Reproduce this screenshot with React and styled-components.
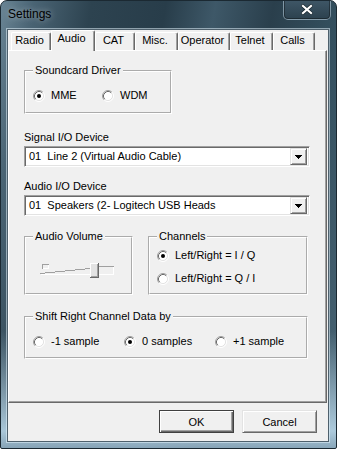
import React from "react";
import styled, { createGlobalStyle } from "styled-components";

const Global = createGlobalStyle`
  html, body {
    margin: 0;
    padding: 0;
    background: #fff;
  }
  body {
    width: 337px;
    height: 449px;
    overflow: hidden;
    font-family: "Liberation Sans", Arial, sans-serif;
    font-size: 11px;
    color: #000;
  }
`;

const Window = styled.div`
  box-sizing: border-box;
  width: 337px;
  height: 449px;
  display: flex;
  flex-direction: column;
  border: 1px solid #1b2932;
  border-radius: 7px 7px 2px 2px;
  overflow: hidden;
  background:
    linear-gradient(to bottom, rgba(255,255,255,0) 0, rgba(255,255,255,0) 330px, rgba(190,220,238,0.85) 430px, rgba(140,170,190,0.9) 449px),
    linear-gradient(100deg, #6a8595 0%, #4a6474 8%, #2d4350 22%, #283d4a 40%, #3e5868 52%, #2a3f4c 66%, #34505f 82%, #4a6575 100%);
`;

const TitleBar = styled.div`
  height: 28px;
  display: flex;
  align-items: flex-start;
  flex-shrink: 0;
`;

const Title = styled.div`
  padding: 6px 0 0 7px;
  font-size: 12px;
  line-height: 14px;
  color: #000;
  text-shadow: 0 0 6px rgba(255, 255, 255, 0.55);
`;

const CloseButton = styled.div`
  box-sizing: border-box;
  margin: -1px 5px 0 auto;
  width: 48px;
  height: 20px;
  display: flex;
  align-items: center;
  justify-content: center;
  border: 1px solid rgba(200, 222, 236, 0.5);
  border-top: none;
  border-radius: 0 0 5px 5px;
  box-shadow: inset 0 0 0 1px rgba(0, 0, 0, 0.35);
  background: linear-gradient(#3f5767, #2c414e);
`;

const Client = styled.div`
  box-sizing: border-box;
  flex: 1;
  margin: 0 7px 6px 6px;
  display: flex;
  flex-direction: column;
  background: #f0f0f0;
  border: 1px solid #4e606c;
  box-shadow: 0 0 0 1px rgba(225, 242, 252, 0.55);
`;

const TabStrip = styled.div`
  height: 20px;
  display: flex;
  align-items: flex-end;
  padding-left: 3px;
  position: relative;
  z-index: 1;
`;

const Tab = styled.div`
  box-sizing: border-box;
  width: ${(p) => p.$w}px;
  height: ${(p) => (p.$active ? 21 : 18)}px;
  margin-bottom: ${(p) => (p.$active ? -1 : 0)}px;
  padding: 1px 3px 0 0;
  text-align: center;
  line-height: 13px;
  background: #f0f0f0;
  border: 1px solid #fff;
  border-right-color: #696969;
  border-bottom: none;
  border-radius: 2px 2px 0 0;
  box-shadow: inset -1px 0 0 #a0a0a0;
`;

const Panel = styled.div`
  box-sizing: border-box;
  height: 353px;
  margin-right: 1px;
  padding-left: 15px;
  display: flex;
  flex-direction: column;
  align-items: flex-start;
  border: 1px solid;
  border-color: #fff #696969 #696969 #fff;
  box-shadow: inset -1px -1px 0 #a0a0a0;
`;

const Group = styled.fieldset`
  box-sizing: border-box;
  min-width: 0;
  margin: ${(p) => p.$mt || 0}px 0 0;
  width: ${(p) => p.$w}px;
  height: ${(p) => p.$h}px;
  padding: ${(p) => p.$pt}px 0 0 7px;
  border: 2px groove #fff;
  display: ${(p) => (p.$column ? "flex" : "block")};
  flex-direction: column;
  gap: ${(p) => p.$gap || 0}px;
`;

const Legend = styled.legend`
  padding: 0 2px;
  line-height: 13px;
`;

const RadioRow = styled.div`
  display: flex;
`;

const RadioItem = styled.label`
  display: flex;
  align-items: center;
  gap: 6px;
  width: ${(p) => (p.$w ? `${p.$w}px` : "auto")};
  line-height: 13px;
`;

const FieldLabel = styled.div`
  margin-top: ${(p) => p.$mt}px;
  line-height: 13px;
`;

const Combo = styled.div`
  box-sizing: border-box;
  width: 286px;
  height: 21px;
  margin-top: 2px;
  padding: 2px 2px 2px 4px;
  display: flex;
  align-items: center;
  background: #fff;
  border: 1px solid;
  border-color: #a0a0a0 #fff #fff #a0a0a0;
  box-shadow: inset 1px 1px 0 #696969, inset -1px -1px 0 #e3e3e3;
  white-space: pre;
  line-height: 13px;
`;

const DropButton = styled.div`
  box-sizing: border-box;
  margin-left: auto;
  width: 17px;
  height: 17px;
  display: flex;
  align-items: center;
  justify-content: center;
  background: #f0f0f0;
  border: 1px solid;
  border-color: #e3e3e3 #696969 #696969 #e3e3e3;
  box-shadow: inset 1px 1px 0 #fff, inset -1px -1px 0 #a0a0a0;
`;

const GroupRow = styled.div`
  display: flex;
  gap: 15px;
  margin-top: 14px;
`;

const SliderBox = styled.div`
  margin-left: 7px;
  width: 76px;
  height: 20px;
`;

const Footer = styled.div`
  display: flex;
  justify-content: flex-end;
  gap: 8px;
  padding: 7px 11px 0 0;
`;

const Button = styled.button`
  box-sizing: border-box;
  width: 75px;
  height: 23px;
  padding: 0;
  font: 11px "Liberation Sans", Arial, sans-serif;
  color: #000;
  background: #f0f0f0;
  border: 1px solid;
  border-color: ${(p) => (p.$default ? "#404040" : "#e3e3e3 #696969 #696969 #e3e3e3")};
  box-shadow: ${(p) =>
    p.$default
      ? "inset 1px 1px 0 #fff, inset -1px -1px 0 #696969, inset -2px -2px 0 #a0a0a0"
      : "inset 1px 1px 0 #fff, inset -1px -1px 0 #a0a0a0"};
`;

const RadioIcon = ({ checked }) => (
  <svg width="12" height="12" viewBox="0 0 12 12">
    <circle cx="6" cy="6" r="4.5" fill="#fff" />
    <path d="M2.11 9.89A5.5 5.5 0 0 1 9.89 2.11" stroke="#a0a0a0" fill="none" />
    <path d="M9.89 2.11A5.5 5.5 0 0 1 2.11 9.89" stroke="#fff" fill="none" />
    <path d="M2.82 9.18A4.5 4.5 0 0 1 9.18 2.82" stroke="#696969" fill="none" />
    <path d="M9.18 2.82A4.5 4.5 0 0 1 2.82 9.18" stroke="#e3e3e3" fill="none" />
    {checked && <circle cx="6" cy="6" r="2" fill="#000" />}
  </svg>
);

const Radio = ({ checked, w, children }) => (
  <RadioItem $w={w}>
    <RadioIcon checked={checked} />
    <span>{children}</span>
  </RadioItem>
);

const Arrow = () => (
  <svg width="7" height="4" viewBox="0 0 7 4" shapeRendering="crispEdges">
    <path d="M0 0h7l-3.5 4z" fill="#000" />
  </svg>
);

const CloseIcon = () => (
  <svg width="12" height="11" viewBox="0 0 12 11">
    <path d="M2 2l8 7M10 2l-8 7" stroke="#1b2a33" strokeWidth="3.6" strokeLinecap="square" />
    <path d="M2 2l8 7M10 2l-8 7" stroke="#fff" strokeWidth="2.2" strokeLinecap="square" />
  </svg>
);

const VolumeSlider = () => (
  <svg width="76" height="20" viewBox="0 0 76 20" shapeRendering="crispEdges">
    <path d="M2.5 7.5V3.5H8.5" stroke="#a0a0a0" fill="none" />
    <path d="M8.5 3.5V7.5H2.5" stroke="#fff" fill="none" />
    <path d="M0.5 12.5L50 7.5" stroke="#a0a0a0" fill="none" />
    <path d="M0.5 13.5H74" stroke="#fff" fill="none" />
    <path d="M59 5.5H73.5" stroke="#a0a0a0" fill="none" />
    <path d="M73.5 5.5V13.5" stroke="#fff" fill="none" />
    <rect x="50" y="2" width="9" height="15" fill="#e3e3e3" />
    <path d="M50.5 16V2.5H58" stroke="#fff" fill="none" />
    <path d="M57.5 3V15.5H51" stroke="#a0a0a0" fill="none" />
    <path d="M58.5 2V16.5H50" stroke="#696969" fill="none" />
  </svg>
);

const tabs = [
  { name: "Radio", w: 40 },
  { name: "Audio", w: 44, active: true },
  { name: "CAT", w: 40 },
  { name: "Misc.", w: 43 },
  { name: "Operator", w: 52 },
  { name: "Telnet", w: 43 },
  { name: "Calls", w: 42 },
];

export default function App() {
  return (
    <>
      <Global />
      <Window>
        <TitleBar>
          <Title>Settings</Title>
          <CloseButton>
            <CloseIcon />
          </CloseButton>
        </TitleBar>
        <Client>
          <TabStrip>
            {tabs.map((t) => (
              <Tab key={t.name} $w={t.w} $active={t.active}>
                {t.name}
              </Tab>
            ))}
          </TabStrip>
          <Panel>
            <Group $mt={13} $w={148} $h={50} $pt={12}>
              <Legend>Soundcard Driver</Legend>
              <RadioRow>
                <Radio checked w={69}>MME</Radio>
                <Radio>WDM</Radio>
              </RadioRow>
            </Group>

            <FieldLabel $mt={17}>Signal I/O Device</FieldLabel>
            <Combo>
              <span>01  Line 2 (Virtual Audio Cable)</span>
              <DropButton>
                <Arrow />
              </DropButton>
            </Combo>

            <FieldLabel $mt={13}>Audio I/O Device</FieldLabel>
            <Combo>
              <span>01  Speakers (2- Logitech USB Heads</span>
              <DropButton>
                <Arrow />
              </DropButton>
            </Combo>

            <GroupRow>
              <Group $w={109} $h={65} $pt={18}>
                <Legend>Audio Volume</Legend>
                <SliderBox>
                  <VolumeSlider />
                </SliderBox>
              </Group>
              <Group $w={160} $h={65} $pt={6} $column $gap={10}>
                <Legend>Channels</Legend>
                <Radio checked>Left/Right = I / Q</Radio>
                <Radio>Left/Right = Q / I</Radio>
              </Group>
            </GroupRow>

            <Group $mt={15} $w={284} $h={49} $pt={12}>
              <Legend>Shift Right Channel Data by</Legend>
              <RadioRow>
                <Radio w={91}>-1 sample</Radio>
                <Radio checked w={91}>0 samples</Radio>
                <Radio>+1 sample</Radio>
              </RadioRow>
            </Group>
          </Panel>
          <Footer>
            <Button $default>OK</Button>
            <Button>Cancel</Button>
          </Footer>
        </Client>
      </Window>
    </>
  );
}
